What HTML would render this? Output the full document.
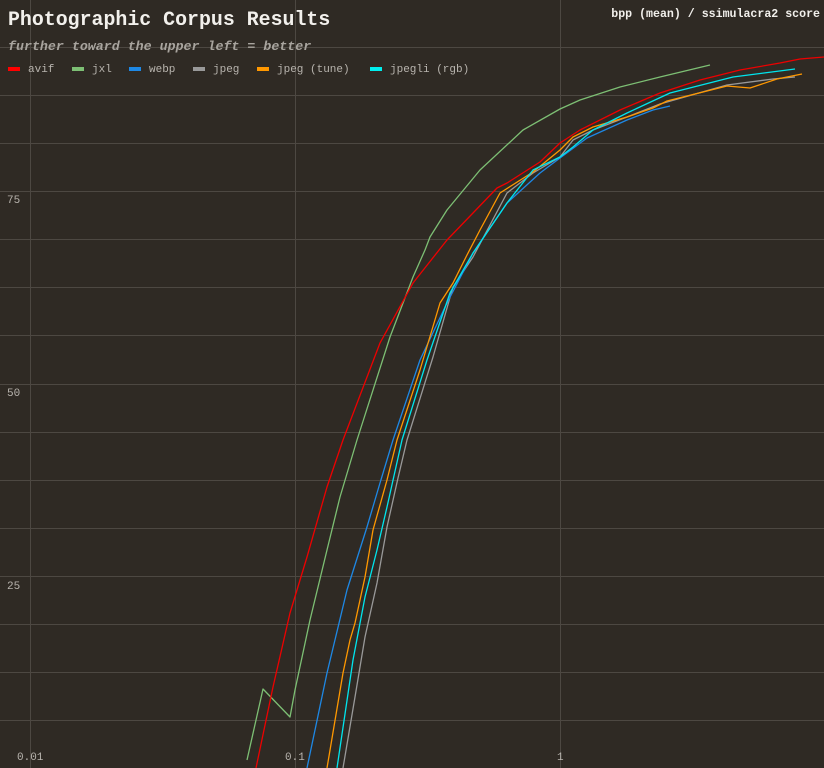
<!DOCTYPE html>
<html><head><meta charset="utf-8"><style>
html,body{margin:0;padding:0;background:#2f2a24;}
svg{display:block}
</style></head><body>
<svg width="824" height="768" xmlns="http://www.w3.org/2000/svg">
<rect width="824" height="768" fill="#2f2a24"/>
<g stroke="#4d4842" stroke-width="1">
<line x1="30.5" y1="0" x2="30.5" y2="768"/>
<line x1="295.5" y1="0" x2="295.5" y2="768"/>
<line x1="560.5" y1="0" x2="560.5" y2="768"/>
<line x1="0" y1="47.5" x2="824" y2="47.5"/>
<line x1="0" y1="95.5" x2="824" y2="95.5"/>
<line x1="0" y1="143.5" x2="824" y2="143.5"/>
<line x1="0" y1="191.5" x2="824" y2="191.5"/>
<line x1="0" y1="239.5" x2="824" y2="239.5"/>
<line x1="0" y1="287.5" x2="824" y2="287.5"/>
<line x1="0" y1="335.5" x2="824" y2="335.5"/>
<line x1="0" y1="384.5" x2="824" y2="384.5"/>
<line x1="0" y1="432.5" x2="824" y2="432.5"/>
<line x1="0" y1="480.5" x2="824" y2="480.5"/>
<line x1="0" y1="528.5" x2="824" y2="528.5"/>
<line x1="0" y1="576.5" x2="824" y2="576.5"/>
<line x1="0" y1="624.5" x2="824" y2="624.5"/>
<line x1="0" y1="672.5" x2="824" y2="672.5"/>
<line x1="0" y1="720.5" x2="824" y2="720.5"/>
</g>
<g font-family="Liberation Mono, monospace" font-size="11" fill="#b8b4ae">
<text x="7" y="203">75</text>
<text x="7" y="396">50</text>
<text x="7" y="589">25</text>
<text x="17" y="760">0.01</text>
<text x="285" y="760">0.1</text>
<text x="557" y="760">1</text>
</g>
<g fill="none" stroke-width="1.3" stroke-linejoin="round">
<polyline stroke="#7dbf74" points="247,760 263,689 290,717 295,690 310,620 327,550 340,497 357,440 390,337 413,277 425,250 430,237 447,210 480,170 523,130 560,109 580,100 620,87 660,77 710,65"/>
<polyline stroke="#999" points="343,768 355,697 365,637 377,583 387,527 398,478 407,440 433,357 453,287 473,257 507,193 533,173 560,157 573,140 593,130 627,117 660,104 727,85 773,79 795,77"/>
<polyline stroke="#1e88e5" points="307,768 327,673 347,590 367,527 380,483 393,440 420,360 447,303 473,253 507,203 540,173 560,158 587,138 627,120 653,110 670,106"/>
<polyline stroke="#ff9800" points="327,768 343,673 350,640 355,623 365,577 373,530 387,480 397,440 420,370 440,303 453,283 467,255 480,230 500,193 533,172 560,150 573,137 593,127 627,117 653,108 667,101 727,86 750,88 777,79 802,74"/>
<polyline stroke="#00e5ee" points="337,768 353,660 365,597 377,550 387,507 402,440 427,360 450,293 473,253 507,203 533,170 560,157 573,147 593,130 613,120 627,113 670,93 733,77 795,69"/>
<polyline stroke="#ee0000" points="256,768 273,687 290,613 307,557 327,487 343,440 380,343 413,283 447,240 473,213 497,188 507,183 540,162 560,143 580,130 620,110 660,93 700,80 740,70 780,63 800,59 824,57"/>
</g>
<text x="8" y="25" font-family="Liberation Mono, monospace" font-size="19.9" font-weight="bold" fill="#f2f0ec">Photographic Corpus Results</text>
<text x="8" y="50" font-family="Liberation Mono, monospace" font-size="13.3" font-weight="bold" font-style="italic" fill="#a8a49e">further toward the upper left = better</text>
<text x="820" y="17" text-anchor="end" font-family="Liberation Mono, monospace" font-size="11.6" font-weight="bold" fill="#f2f0ec">bpp (mean) / ssimulacra2 score</text>
<g font-family="Liberation Mono, monospace" font-size="11" fill="#b8b4ae">
<rect x="8" y="67" width="12" height="4" fill="#ff0000"/><text x="28" y="72">avif</text>
<rect x="72" y="67" width="12" height="4" fill="#7dbf74"/><text x="92" y="72">jxl</text>
<rect x="129" y="67" width="12" height="4" fill="#1e88e5"/><text x="149" y="72">webp</text>
<rect x="193" y="67" width="12" height="4" fill="#999"/><text x="213" y="72">jpeg</text>
<rect x="257" y="67" width="12" height="4" fill="#ff9800"/><text x="277" y="72">jpeg (tune)</text>
<rect x="370" y="67" width="12" height="4" fill="#00eeee"/><text x="390" y="72">jpegli (rgb)</text>
</g>
</svg>
</body></html>
